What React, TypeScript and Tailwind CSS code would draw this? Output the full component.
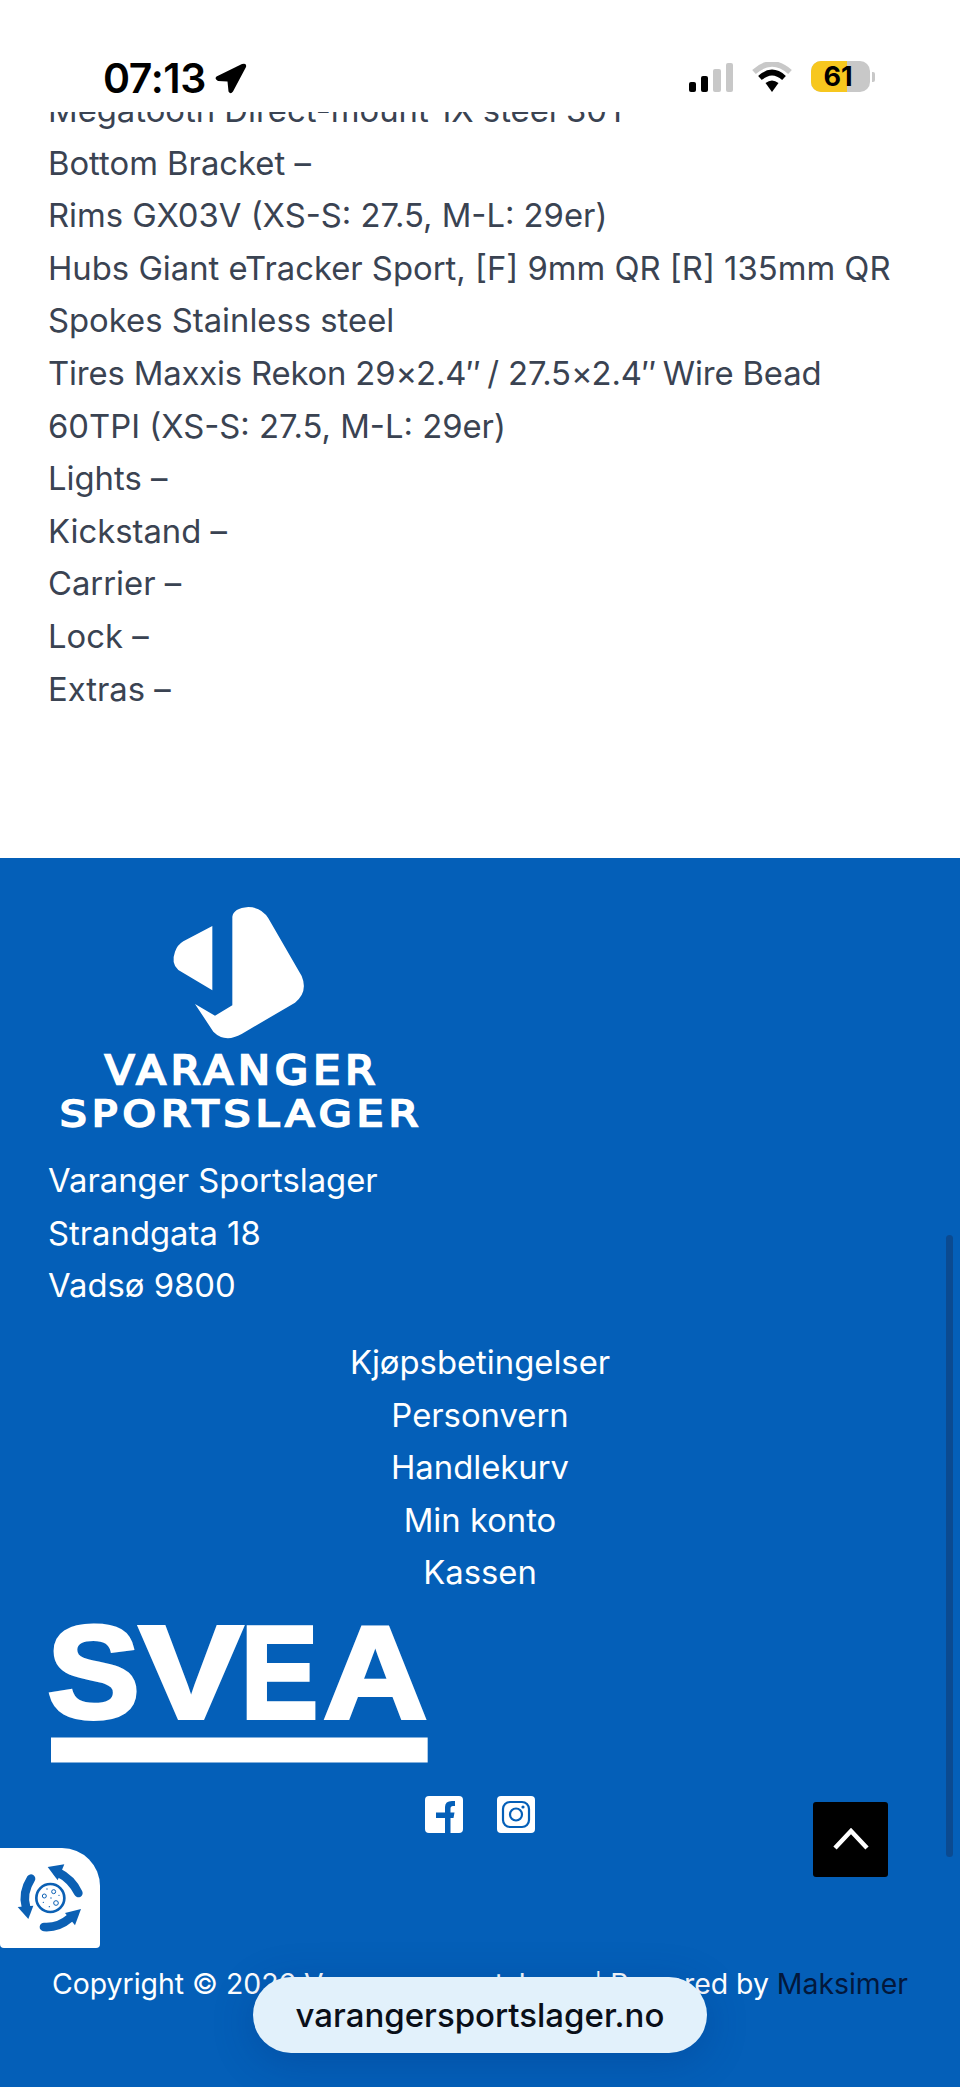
import React from "react";

const specs: React.ReactNode[] = [
  "Megatooth Direct-mount 1X steel 30T",
  "Bottom Bracket –",
  "Rims GX03V (XS-S: 27.5, M-L: 29er)",
  "Hubs Giant eTracker Sport, [F] 9mm QR [R] 135mm QR",
  "Spokes Stainless steel",
  <>
    <span className="tracking-[-0.15px]">
      Tires Maxxis Rekon 29<span className="tracking-[-1px]">×</span>2.4<span className="tracking-[-2.5px]">″</span> / 27.5<span className="tracking-[-1px]">×</span>2.4<span className="tracking-[-2.5px]">″</span> Wire Bead
    </span>{" "}
    60TPI (XS-S: 27.5, M-L: 29er)
  </>,
  "Lights –",
  "Kickstand –",
  "Carrier –",
  "Lock –",
  "Extras –",
];

const links = ["Kjøpsbetingelser", "Personvern", "Handlekurv", "Min konto", "Kassen"];

function StatusBar() {
  return (
    <div className="relative z-10 h-[112px] bg-white flex items-start justify-between pt-[54px] pl-[103px] pr-[85px]">
      <div className="flex items-center gap-[9px] h-[48px]">
        <span className="text-[41px] leading-[48px] font-semibold text-black tracking-[-0.4px]">07:13</span>
        <svg width="32" height="31" viewBox="0 0 32 31">
          <path d="M1.5 13.5 L27 1 Q32 -0.5 31 4 L18 28.5 Q15.5 32 13.5 28.5 L12.5 18.5 L3 18 Q-1 16 1.5 13.5 Z" fill="#000" />
        </svg>
      </div>
      <div className="flex items-start gap-[19px] pt-[8px]">
        <div className="flex items-end gap-[5px] h-[31px] pb-[1px]">
          <div className="w-[7px] h-[10px] rounded-[2px] bg-black" />
          <div className="w-[7px] h-[16px] rounded-[2px] bg-black" />
          <div className="w-[8px] h-[23px] rounded-[2px] bg-[#c8c8c8]" />
          <div className="w-[7px] h-[29px] rounded-[2px] bg-[#c8c8c8]" />
        </div>
        <svg width="40" height="30" viewBox="0 0 40 30">
          <path d="M2 10 Q20 -6 38 10" fill="none" stroke="#c8c8c8" strokeWidth="5.5" strokeLinecap="butt" />
          <path d="M8 16 Q20 5 32 16" fill="none" stroke="#000" strokeWidth="5.5" />
          <path d="M13.5 21 L20 30 L26.5 21 Q20 16 13.5 21 Z" fill="#000" />
        </svg>
        <div className="flex items-center gap-[2px] -mt-[1px]">
          <div className="relative w-[59px] h-[31px] rounded-[10px] overflow-hidden bg-[#c8c8c8] flex">
            <div className="w-[36px] h-full bg-[#f7c71e]" />
            <span className="absolute inset-0 flex items-center justify-center pr-[5px] text-[27px] font-bold text-black leading-none">61</span>
          </div>
          <div className="w-[3px] h-[10px] rounded-r-[2px] bg-[#c8c8c8]" />
        </div>
      </div>
    </div>
  );
}

function VarangerLogo() {
  return (
    <svg width="384" height="250" viewBox="144 120 1152 750" className="block">
      <path d="M637 228 L637 421 L535 360 Q512 340 525 305 Q532 285 550 274 Z" fill="#fff" />
      <path d="M697 200 Q700 175 745 171 Q785 172 805 205 L905 378 Q925 425 885 458 L725 552 Q675 580 640 545 L585 462 L645 497 L697 466 Z" fill="#fff" />
      <text x="315" y="703" textLength="825" lengthAdjust="spacingAndGlyphs" letterSpacing="14" fontFamily="'DejaVu Sans', sans-serif" fontSize="117" fill="#fff" stroke="#fff" strokeWidth="7">VARANGER</text>
      <text x="180" y="828" textLength="1090" lengthAdjust="spacingAndGlyphs" letterSpacing="14" fontFamily="'DejaVu Sans', sans-serif" fontSize="108" fill="#fff" stroke="#fff" strokeWidth="7">SPORTSLAGER</text>
    </svg>
  );
}

function SveaLogo() {
  const common = {
    fontFamily: "'Liberation Sans', sans-serif",
    fontWeight: 700,
    fontSize: 395,
    fill: "#fff",
    stroke: "#fff",
    strokeWidth: 12,
    lengthAdjust: "spacingAndGlyphs" as const,
  };
  return (
    <svg width="384" height="147" viewBox="144 60 1152 440" className="block">
      <text x="142" y="352" textLength="278" {...common}>S</text>
      <text x="418" y="352" textLength="310" {...common}>V</text>
      <text x="722" y="352" textLength="232" {...common}>E</text>
      <text x="970" y="352" textLength="312" {...common}>A</text>
      <rect x="153" y="412" width="1130" height="75" fill="#fff" />
    </svg>
  );
}

function Facebook() {
  return (
    <svg width="38" height="37" viewBox="0 0 38 37">
      <rect width="38" height="37" rx="4" fill="#fff" />
      <path d="M20 37 V22 H11 V16.5 H20 V11 Q20 5 27 5 H30 V10 H28 Q25.5 10 25.5 12.5 V16.5 H29.5 L28.5 22 H25.5 V37 Z" fill="#045fb8" />
    </svg>
  );
}

function Instagram() {
  return (
    <svg width="38" height="37" viewBox="0 0 38 37">
      <rect width="38" height="37" rx="4" fill="#fff" />
      <rect x="6" y="6" width="26" height="25" rx="7" fill="none" stroke="#045fb8" strokeWidth="2.2" />
      <circle cx="19" cy="18.5" r="6" fill="none" stroke="#045fb8" strokeWidth="2.2" />
      <circle cx="26" cy="11" r="1.6" fill="#045fb8" />
    </svg>
  );
}

function WheelWidget() {
  return (
    <div className="absolute left-0 top-[1848px] w-[100px] h-[100px] bg-white rounded-tr-[38px] rounded-br-[4px] rounded-bl-[4px]">
      <svg width="100" height="100" viewBox="0 55 300 300" className="block">
        <g fill="none" stroke="#0b60b4" strokeWidth="26" strokeLinecap="round">
          <path d="M235 190 Q215 148 172 127" />
          <path d="M93 147 Q66 190 78 232" />
          <path d="M132 292 Q175 295 210 265" />
        </g>
        <g fill="#0b60b4">
          <path d="M143 112 L193 104 L173 152 Z" />
          <path d="M53 232 L100 228 L85 268 Z" />
          <path d="M243 238 L195 250 L225 287 Z" />
        </g>
        <circle cx="151" cy="205" r="42" fill="none" stroke="#0b60b4" strokeWidth="8" />
        <circle cx="133" cy="199" r="6" fill="none" stroke="#0b60b4" strokeWidth="3" />
        <circle cx="161" cy="186" r="6" fill="none" stroke="#0b60b4" strokeWidth="3" />
        <circle cx="168" cy="220" r="7" fill="none" stroke="#0b60b4" strokeWidth="3" />
        <g fill="#0b60b4">
          <circle cx="141" cy="178" r="2" />
          <circle cx="153" cy="205" r="2" />
          <circle cx="177" cy="197" r="2" />
          <circle cx="130" cy="218" r="2" />
          <circle cx="148" cy="231" r="2" />
        </g>
      </svg>
    </div>
  );
}

export default function App() {
  return (
    <div className="relative w-[960px] h-[2087px] overflow-hidden bg-white font-['Inter',sans-serif]">
      <StatusBar />
      <main className="-mt-[28px] px-[48px] pb-[143px] text-[32.8px] leading-[52.6px] text-[#3a4352]">
        {specs.map((s, i) => (
          <p key={i}>{s}</p>
        ))}
      </main>

      <footer className="h-[1229px] bg-[#045fb8] text-white text-[32.8px] leading-[52.6px] pt-[32px] px-[48px]">
        <VarangerLogo />
        <div className="mt-[14px]">
          <p>Varanger Sportslager</p>
          <p>Strandgata 18</p>
          <p>Vadsø 9800</p>
        </div>
        <nav className="mt-[24px] flex flex-col items-center">
          {links.map((l) => (
            <a key={l}>{l}</a>
          ))}
        </nav>
        <div className="mt-[21px]">
          <SveaLogo />
        </div>
        <div className="mt-[29px] flex justify-center gap-[34px]">
          <Facebook />
          <Instagram />
        </div>
        <p className="mt-[125px] text-center text-[28.4px] whitespace-nowrap">
          Copyright © 2026 Varanger sportslager <span className="text-[24px]">|</span> Powered by <span className="text-[#03183c]">Maksimer</span>
        </p>
      </footer>

      <WheelWidget />

      <div className="absolute left-[813px] top-[1802px] w-[75px] h-[75px] bg-black rounded-[3px] flex items-center justify-center pb-[2px]">
        <svg width="36" height="24" viewBox="0 0 36 24" fill="none" stroke="#fff" strokeWidth="4.5">
          <path d="M2 21 L18 4 L34 21" />
        </svg>
      </div>

      <div className="absolute left-[946px] top-[1235px] w-[7px] h-[622px] rounded-full bg-[#0b4a90]" />

      <div className="absolute left-[253px] top-[1977px] w-[454px] h-[76px] rounded-[38px] bg-[#e2f1fb] shadow-[0_8px_40px_rgba(0,40,110,0.25)] flex items-center justify-center pt-[2px] text-[33px] font-medium text-[#0a0f18]">
        varangersportslager.no
      </div>
    </div>
  );
}
